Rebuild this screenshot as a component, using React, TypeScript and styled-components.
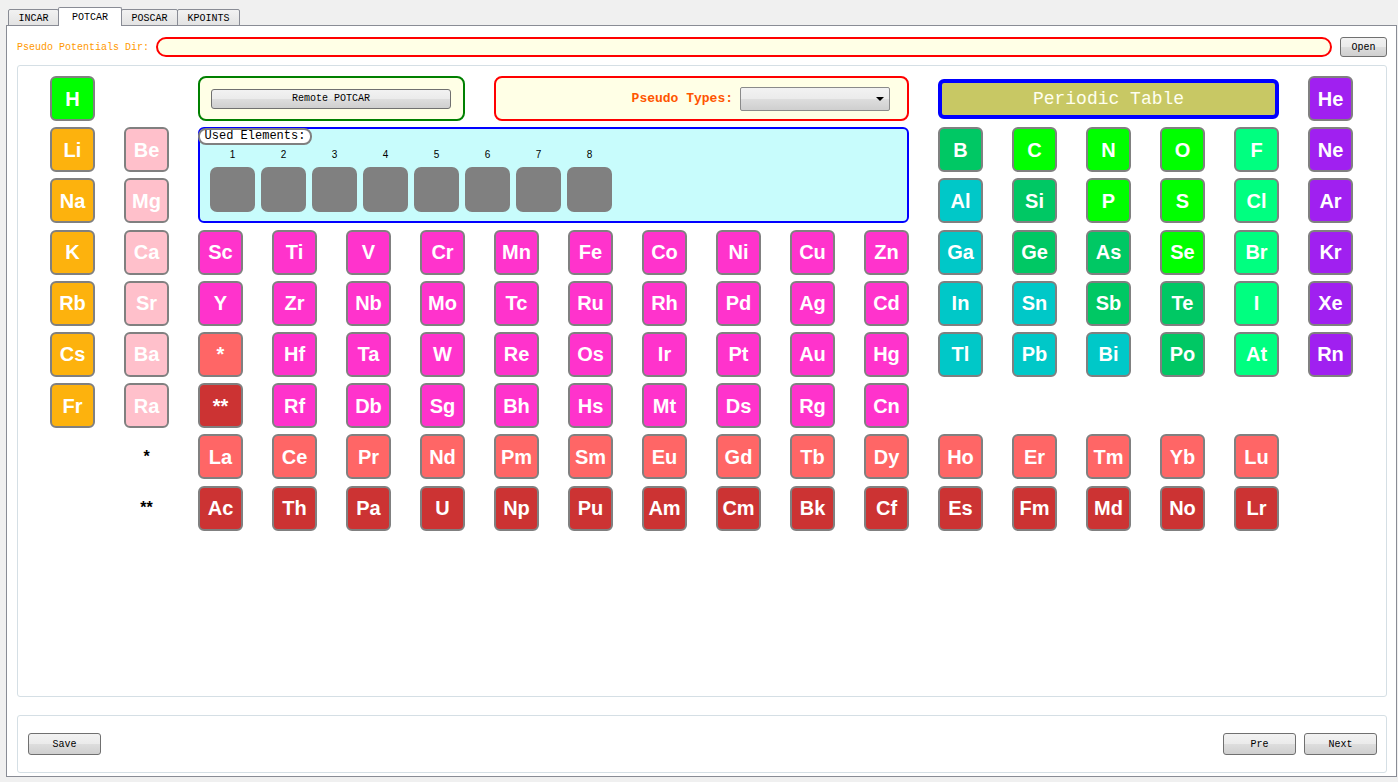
import React from "react";
import styled, { createGlobalStyle } from "styled-components";

const Global = createGlobalStyle`
  html, body { margin: 0; padding: 0; background: #f0f0f0; }
  body { font-family: "Liberation Mono", "DejaVu Sans Mono", monospace; font-size: 10px; color: #000; }
  * { box-sizing: border-box; }
`;

const C = {
  h: "#00ff00",
  alk: "#fdb20d",
  ae: "#ffc0cb",
  tm: "#ff33cc",
  lan: "#ff6666",
  act: "#cc3333",
  noble: "#a020f0",
  teal: "#00c8c8",
  gm: "#00c864",
  lime: "#00ff00",
  spring: "#00ff80",
};

type El = { s: string; c: string; r: number; col: number };

const els: El[] = [];
const add = (r: number, startCol: number, syms: string[], colors: string[] | string) => {
  syms.forEach((s, i) => {
    els.push({ s, r, col: startCol + i, c: Array.isArray(colors) ? colors[i] : colors });
  });
};

add(1, 1, ["H"], C.h);
add(1, 18, ["He"], C.noble);
add(2, 1, ["Li", "Be"], [C.alk, C.ae]);
add(2, 13, ["B", "C", "N", "O", "F", "Ne"], [C.gm, C.lime, C.lime, C.lime, C.spring, C.noble]);
add(3, 1, ["Na", "Mg"], [C.alk, C.ae]);
add(3, 13, ["Al", "Si", "P", "S", "Cl", "Ar"], [C.teal, C.gm, C.lime, C.lime, C.spring, C.noble]);
add(4, 1, ["K", "Ca"], [C.alk, C.ae]);
add(4, 3, ["Sc", "Ti", "V", "Cr", "Mn", "Fe", "Co", "Ni", "Cu", "Zn"], C.tm);
add(4, 13, ["Ga", "Ge", "As", "Se", "Br", "Kr"], [C.teal, C.gm, C.gm, C.lime, C.spring, C.noble]);
add(5, 1, ["Rb", "Sr"], [C.alk, C.ae]);
add(5, 3, ["Y", "Zr", "Nb", "Mo", "Tc", "Ru", "Rh", "Pd", "Ag", "Cd"], C.tm);
add(5, 13, ["In", "Sn", "Sb", "Te", "I", "Xe"], [C.teal, C.teal, C.gm, C.gm, C.spring, C.noble]);
add(6, 1, ["Cs", "Ba", "*"], [C.alk, C.ae, C.lan]);
add(6, 4, ["Hf", "Ta", "W", "Re", "Os", "Ir", "Pt", "Au", "Hg"], C.tm);
add(6, 13, ["Tl", "Pb", "Bi", "Po", "At", "Rn"], [C.teal, C.teal, C.teal, C.gm, C.spring, C.noble]);
add(7, 1, ["Fr", "Ra", "**"], [C.alk, C.ae, C.act]);
add(7, 4, ["Rf", "Db", "Sg", "Bh", "Hs", "Mt", "Ds", "Rg", "Cn"], C.tm);
add(8, 3, ["La", "Ce", "Pr", "Nd", "Pm", "Sm", "Eu", "Gd", "Tb", "Dy", "Ho", "Er", "Tm", "Yb", "Lu"], C.lan);
add(9, 3, ["Ac", "Th", "Pa", "U", "Np", "Pu", "Am", "Cm", "Bk", "Cf", "Es", "Fm", "Md", "No", "Lr"], C.act);

const Root = styled.div`
  width: 1398px;
  height: 782px;
  padding-top: 7px;
  display: flex;
  flex-direction: column;
`;

const TabBar = styled.div`
  display: flex;
  align-items: flex-end;
  height: 19px;
  margin: 0 0 -1px 8px;
  position: relative;
  z-index: 1;
`;

const Tab = styled.div<{ $active?: boolean }>`
  height: ${(p) => (p.$active ? 19 : 17)}px;
  padding: 0 ${(p) => (p.$active ? 13 : 9.5)}px;
  margin-left: -1px;
  &:first-child { margin-left: 0; }
  position: relative;
  z-index: ${(p) => (p.$active ? 2 : 1)};
  border: 1px solid #898c95;
  border-bottom: ${(p) => (p.$active ? "none" : "1px solid #898c95")};
  border-radius: 2px 2px 0 0;
  background: ${(p) => (p.$active ? "#ffffff" : "linear-gradient(#f2f2f2, #e3e3e3)")};
  display: flex;
  align-items: center;
  justify-content: center;
  font-size: 10px;
  padding-top: ${(p) => (p.$active ? 0 : 1)}px;
`;

const Pane = styled.div`
  margin-left: 6px;
  width: 1391px;
  height: 752px;
  border: 1px solid #898c95;
  background: #ffffff;
  padding: 11px 9px 3px 10px;
  display: flex;
  flex-direction: column;
`;

const DirRow = styled.div`
  display: flex;
  align-items: center;
  height: 20px;
  gap: 7px;
`;

const DirLabel = styled.span`
  color: #ff9900;
  font-size: 10px;
  white-space: nowrap;
`;

const DirInput = styled.div`
  flex: 1;
  height: 20px;
  border: 2px solid #ff0000;
  border-radius: 10px;
  background: #ffffe6;
  margin-right: 1px;
`;

const Btn = styled.button<{ $w: number; $h: number }>`
  width: ${(p) => p.$w}px;
  height: ${(p) => p.$h}px;
  border: 1px solid #707070;
  border-radius: 3px;
  background: linear-gradient(#f2f2f2 0%, #ebebeb 48%, #dddddd 52%, #cfcfcf 100%);
  font-family: "Liberation Mono", "DejaVu Sans Mono", monospace;
  font-size: 10px;
  color: #000;
  padding: 0;
  display: flex;
  align-items: center;
  justify-content: center;
  flex-shrink: 0;
`;

const Panel = styled.div`
  margin-top: 8px;
  flex: 1;
  border: 1px solid #d5dfe5;
  border-radius: 3px;
  padding: 10px 0 0 32px;
`;

const Grid = styled.div`
  display: grid;
  grid-template-columns: repeat(18, 45px);
  grid-auto-rows: 45px;
  column-gap: 29px;
  row-gap: 6.2px;
`;

const Cell = styled.div<{ $bg: string }>`
  border: 2px solid #808080;
  border-radius: 6px;
  background: ${(p) => p.$bg};
  color: #ffffff;
  font-family: "Liberation Sans", Arial, sans-serif;
  font-weight: bold;
  font-size: 20px;
  display: flex;
  align-items: center;
  justify-content: center;
  padding-top: 1px;
`;

const StarLabel = styled.div`
  font-family: "Liberation Sans", Arial, sans-serif;
  font-weight: bold;
  font-size: 16px;
  color: #000;
  display: flex;
  align-items: center;
  justify-content: center;
`;

const RemoteBox = styled.div`
  grid-column: 3 / 7;
  grid-row: 1;
  border: 2px solid #008000;
  border-radius: 8px;
  background: #ffffe6;
  display: flex;
  align-items: center;
  padding: 0 11px;
`;

const TypesBox = styled.div`
  grid-column: 7 / 13;
  grid-row: 1;
  border: 2px solid #ff0000;
  border-radius: 8px;
  background: #ffffe6;
  display: flex;
  align-items: center;
  justify-content: flex-end;
  gap: 7px;
  padding-right: 17px;
`;

const TypesLabel = styled.span`
  color: #ff5500;
  font-weight: bold;
  font-size: 13px;
`;

const Combo = styled.div`
  width: 150px;
  height: 24px;
  border: 1px solid #8a8a8a;
  border-radius: 2px;
  background: linear-gradient(#f2f2f2 0%, #ebebeb 48%, #dddddd 52%, #cfcfcf 100%);
  display: flex;
  align-items: center;
  justify-content: flex-end;
  padding-right: 5px;
`;

const Arrow = styled.span`
  width: 0;
  height: 0;
  border-left: 4px solid transparent;
  border-right: 4px solid transparent;
  border-top: 4px solid #000;
`;

const TitleBox = styled.div`
  grid-column: 13 / 18;
  grid-row: 1;
  align-self: center;
  height: 40px;
  border: 4px solid #0000ff;
  border-radius: 6px;
  background: #c8c864;
  color: #fffff0;
  font-size: 18px;
  display: flex;
  align-items: center;
  justify-content: center;
`;

const UsedBox = styled.div`
  grid-column: 3 / 13;
  grid-row: 2 / 4;
  position: relative;
  border: 2px solid #0000ff;
  border-radius: 6px;
  background: #c8fcfc;
  padding: 20px 0 0 10px;
  display: flex;
  gap: 6px;
`;

const UsedTitle = styled.div`
  position: absolute;
  top: -1px;
  left: -2px;
  width: 114px;
  height: 17px;
  border: 2px solid #808080;
  border-radius: 8px;
  background: #ffffff;
  font-size: 12px;
  line-height: 13px;
  display: flex;
  align-items: center;
  justify-content: center;
`;

const SlotCol = styled.div`
  display: flex;
  flex-direction: column;
  align-items: center;
  gap: 6px;
`;

const SlotNum = styled.div`
  height: 12px;
  line-height: 12px;
  font-family: "Liberation Sans", Arial, sans-serif;
  font-size: 10px;
`;

const Slot = styled.div`
  width: 45px;
  height: 45px;
  border-radius: 7px;
  background: #808080;
`;

const BottomPanel = styled.div`
  margin-top: 18px;
  height: 58px;
  border: 1px solid #d5dfe5;
  border-radius: 3px;
  display: flex;
  align-items: center;
  padding: 0 9px 0 10px;
  gap: 8px;
`;

const Spacer = styled.div`
  flex: 1;
`;

export default function App() {
  return (
    <Root>
      <Global />
      <TabBar>
        <Tab>INCAR</Tab>
        <Tab $active>POTCAR</Tab>
        <Tab>POSCAR</Tab>
        <Tab>KPOINTS</Tab>
      </TabBar>
      <Pane>
        <DirRow>
          <DirLabel>Pseudo Potentials Dir:</DirLabel>
          <DirInput />
          <Btn $w={47} $h={20}>Open</Btn>
        </DirRow>
        <Panel>
          <Grid>
            <RemoteBox>
              <Btn $w={240} $h={20}>Remote POTCAR</Btn>
            </RemoteBox>
            <TypesBox>
              <TypesLabel>Pseudo Types:</TypesLabel>
              <Combo>
                <Arrow />
              </Combo>
            </TypesBox>
            <TitleBox>Periodic Table</TitleBox>
            <UsedBox>
              <UsedTitle>Used Elements:</UsedTitle>
              {[1, 2, 3, 4, 5, 6, 7, 8].map((n) => (
                <SlotCol key={n}>
                  <SlotNum>{n}</SlotNum>
                  <Slot />
                </SlotCol>
              ))}
            </UsedBox>
            {els.map((e) => (
              <Cell key={e.s + e.r} $bg={e.c} style={{ gridRow: e.r, gridColumn: e.col }}>
                {e.s}
              </Cell>
            ))}
            <StarLabel style={{ gridRow: 8, gridColumn: 2 }}>*</StarLabel>
            <StarLabel style={{ gridRow: 9, gridColumn: 2 }}>**</StarLabel>
          </Grid>
        </Panel>
        <BottomPanel>
          <Btn $w={73} $h={22}>Save</Btn>
          <Spacer />
          <Btn $w={73} $h={22}>Pre</Btn>
          <Btn $w={73} $h={22}>Next</Btn>
        </BottomPanel>
      </Pane>
    </Root>
  );
}
